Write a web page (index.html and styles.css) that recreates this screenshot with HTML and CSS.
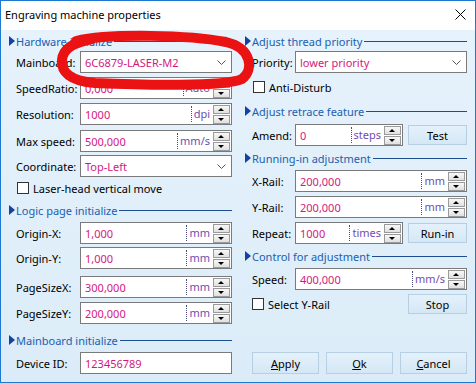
FILE: index.html
```html
<!DOCTYPE html>
<html lang="en">

<head>
    <meta charset="UTF-8" />
    <title>Engraving machine properties</title>
    <link rel="stylesheet" href="styles.css">
</head>

<body>
    <div class="window">
        <!-- Title bar -->
        <div class="titlebar">
            <span class="title">Engraving machine properties</span>
            <svg class="close" width="11" height="11" viewBox="0 0 11 11">
                <path d="M0.5 0.5 L10.5 10.5 M10.5 0.5 L0.5 10.5" stroke="#000" stroke-width="1" />
            </svg>
        </div>

        <div class="client">
            <!-- Left column -->
            <div class="col col-left">
                <div class="group-head"><span class="tri"></span><span class="group-title">Hardware initialize</span><span class="rule"></span></div>
                <div class="row mt2">
                    <span class="lbl">Mainboard:</span>
                    <div class="field combo"><span class="val">6C6879-LASER-M2</span><svg class="chev" width="9" height="5" viewBox="0 0 9 5"><path d="M0.5 0.5 L4.5 4.5 L8.5 0.5" fill="none" stroke="#555" /></svg></div>
                </div>
                <div class="row mt4">
                    <span class="lbl">SpeedRatio:</span>
                    <div class="field"><span class="val">0,000</span><span class="unit">Auto</span><span class="spin"><span class="spin-btn up"></span><span class="spin-btn down"></span></span></div>
                </div>
                <div class="row mt4">
                    <span class="lbl">Resolution:</span>
                    <div class="field"><span class="val">1000</span><span class="unit">dpi</span><span class="spin"><span class="spin-btn up"></span><span class="spin-btn down"></span></span></div>
                </div>
                <div class="row mt5">
                    <span class="lbl">Max speed:</span>
                    <div class="field"><span class="val">500,000</span><span class="unit">mm/s</span><span class="spin"><span class="spin-btn up"></span><span class="spin-btn down"></span></span></div>
                </div>
                <div class="row mt3">
                    <span class="lbl">Coordinate:</span>
                    <div class="field combo"><span class="val">Top-Left</span><svg class="chev" width="9" height="5" viewBox="0 0 9 5"><path d="M0.5 0.5 L4.5 4.5 L8.5 0.5" fill="none" stroke="#555" /></svg></div>
                </div>
                <div class="check-row mt4"><span class="box"></span>Laser-head vertical move</div>

                <div class="group-head mt7"><span class="tri"></span><span class="group-title">Logic page initialize</span><span class="rule"></span></div>
                <div class="row mt4">
                    <span class="lbl">Origin-X:</span>
                    <div class="field"><span class="val">1,000</span><span class="unit">mm</span><span class="spin"><span class="spin-btn up"></span><span class="spin-btn down"></span></span></div>
                </div>
                <div class="row mt3">
                    <span class="lbl">Origin-Y:</span>
                    <div class="field"><span class="val">1,000</span><span class="unit">mm</span><span class="spin"><span class="spin-btn up"></span><span class="spin-btn down"></span></span></div>
                </div>
                <div class="row mt7">
                    <span class="lbl">PageSizeX:</span>
                    <div class="field"><span class="val">300,000</span><span class="unit">mm</span><span class="spin"><span class="spin-btn up"></span><span class="spin-btn down"></span></span></div>
                </div>
                <div class="row mt4">
                    <span class="lbl">PageSizeY:</span>
                    <div class="field"><span class="val">200,000</span><span class="unit">mm</span><span class="spin"><span class="spin-btn up"></span><span class="spin-btn down"></span></span></div>
                </div>

                <div class="group-head mt8"><span class="tri"></span><span class="group-title">Mainboard initialize</span><span class="rule"></span></div>
                <div class="row mt4">
                    <span class="lbl">Device ID:</span>
                    <div class="field"><span class="val">123456789</span></div>
                </div>
            </div>

            <!-- Right column -->
            <div class="col col-right">
                <div class="group-head"><span class="tri"></span><span class="group-title">Adjust thread priority</span><span class="rule"></span></div>
                <div class="row mt2">
                    <span class="lbl">Priority:</span>
                    <div class="field combo"><span class="val">lower priority</span><svg class="chev" width="9" height="5" viewBox="0 0 9 5"><path d="M0.5 0.5 L4.5 4.5 L8.5 0.5" fill="none" stroke="#555" /></svg></div>
                </div>
                <div class="check-row mt7"><span class="box"></span>Anti-Disturb</div>

                <div class="group-head mt9"><span class="tri"></span><span class="group-title">Adjust retrace feature</span><span class="rule"></span></div>
                <div class="row mt5">
                    <span class="lbl">Amend:</span>
                    <div class="field short"><span class="val">0</span><span class="unit">steps</span><span class="spin"><span class="spin-btn up"></span><span class="spin-btn down"></span></span></div>
                    <button class="btn">Test</button>
                </div>

                <div class="group-head mt4"><span class="tri"></span><span class="group-title">Running-in adjustment</span><span class="rule"></span></div>
                <div class="row mt4">
                    <span class="lbl">X-Rail:</span>
                    <div class="field"><span class="val">200,000</span><span class="unit">mm</span><span class="spin"><span class="spin-btn up"></span><span class="spin-btn down"></span></span></div>
                </div>
                <div class="row mt4">
                    <span class="lbl">Y-Rail:</span>
                    <div class="field"><span class="val">200,000</span><span class="unit">mm</span><span class="spin"><span class="spin-btn up"></span><span class="spin-btn down"></span></span></div>
                </div>
                <div class="row mt4">
                    <span class="lbl">Repeat:</span>
                    <div class="field short"><span class="val">1000</span><span class="unit">times</span><span class="spin"><span class="spin-btn up"></span><span class="spin-btn down"></span></span></div>
                    <button class="btn">Run-in</button>
                </div>

                <div class="group-head mt4"><span class="tri"></span><span class="group-title">Control for adjustment</span><span class="rule"></span></div>
                <div class="row mt4">
                    <span class="lbl">Speed:</span>
                    <div class="field"><span class="val">400,000</span><span class="unit">mm/s</span><span class="spin"><span class="spin-btn up"></span><span class="spin-btn down"></span></span></div>
                </div>
                <div class="check-row tall mt4"><span class="box"></span><span class="check-text">Select Y-Rail</span><button class="btn">Stop</button></div>

                <div class="actions">
                    <button class="btn"><u>A</u>pply</button>
                    <button class="btn"><u>O</u>k</button>
                    <button class="btn"><u>C</u>ancel</button>
                </div>
            </div>
        </div>

        <!-- red marker scribble -->
        <svg class="scribble" width="476" height="383" viewBox="0 0 476 383">
            <path d="M76 41 C110 33 190 35 226 42 C252 48 254 70 242 79 C226 87 140 85 95 83 C70 81 61 72 62 60 C63 49 72 43 92 39"
                fill="none" stroke="#ea1212" stroke-width="10" stroke-linecap="round" />
        </svg>
    </div>
</body>

</html>
```

FILE: styles.css
```css
* {
    margin: 0;
    padding: 0;
    box-sizing: border-box;
    font-family: "Noto Sans", "Open Sans", sans-serif;
}

body {
    background-color: #ffffff;
}

.window {
    position: relative;
    width: 476px;
    height: 383px;
    border: 1px solid #1c78d0;
    background-color: #ffffff;
    display: flex;
    flex-direction: column;
}

/* Title bar */
.titlebar {
    height: 29px;
    display: flex;
    align-items: center;
    justify-content: space-between;
    padding: 0 9px 3px 4px;
}

.title {
    font-size: 11px;
    color: #000;
}

/* Client area */
.client {
    flex: 1;
    display: flex;
    gap: 12px;
    padding: 3px 7px 0 7px;
    background: linear-gradient(#e6f2fc, #dbecf8);
}

.col {
    display: flex;
    flex-direction: column;
}

.col-left {
    width: 224px;
}

.col-right {
    width: 223px;
}

.mt2 { margin-top: 2px; }
.mt3 { margin-top: 3px; }
.mt4 { margin-top: 4px; }
.mt5 { margin-top: 5px; }
.mt7 { margin-top: 7px; }
.mt8 { margin-top: 8px; }
.mt9 { margin-top: 9px; }

/* Group headers */
.group-head {
    height: 16px;
    display: flex;
    align-items: center;
}

.tri {
    width: 0;
    height: 0;
    border-left: 6px solid #1342a2;
    border-top: 5px solid transparent;
    border-bottom: 5px solid transparent;
    margin-left: 1px;
}

.group-title {
    color: #2060b0;
    font-size: 11px;
    margin-left: 1px;
    white-space: nowrap;
}

.rule {
    flex: 1;
    height: 1px;
    background-color: #1d4f8e;
    margin-left: 2px;
}

/* Rows */
.row {
    display: flex;
    align-items: center;
    height: 22px;
    padding-left: 8px;
}

.lbl {
    font-size: 11px;
    color: #000;
    white-space: nowrap;
}

.col-left .lbl {
    width: 64px;
}

.col-right .lbl {
    width: 43px;
}

.field {
    flex: 1;
    height: 22px;
    background-color: #ffffff;
    border: 1px solid #7a7a7a;
    display: flex;
    align-items: center;
}

.field.short {
    flex: none;
    width: 108px;
}

.val {
    flex: 1;
    color: #d4187f;
    font-size: 11px;
    padding-left: 4px;
    white-space: nowrap;
}

.unit {
    color: #6f4db2;
    font-size: 11px;
    height: 16px;
    line-height: 15px;
    border-left: 1px dotted #4a4a78;
    padding-left: 2px;
    margin-right: 3px;
}

.chev {
    margin-right: 5px;
}

.spin {
    display: flex;
    flex-direction: column;
    gap: 1px;
    width: 17px;
    margin-right: 1px;
}

.spin-btn {
    position: relative;
    height: 9px;
    border: 1px solid #9a9a9a;
    background: linear-gradient(#f8f8f8, #e0e0e0);
}

.spin-btn::after {
    content: "";
    position: absolute;
    left: 4px;
    top: 2px;
    border-left: 3px solid transparent;
    border-right: 3px solid transparent;
    border-bottom: 3px solid #000;
}

.spin-btn.down::after {
    border-bottom: 0;
    border-top: 3px solid #000;
}

/* Checkboxes */
.check-row {
    display: flex;
    align-items: center;
    height: 14px;
    padding-left: 9px;
    font-size: 11px;
    color: #000;
}

.check-row.tall {
    height: 20px;
    padding-left: 8px;
}

.check-text {
    flex: 1;
}

.box {
    width: 12px;
    height: 12px;
    border: 1px solid #333;
    background-color: #ffffff;
    margin-right: 4px;
}

/* Buttons */
.btn {
    width: 59px;
    height: 20px;
    margin-left: 5px;
    border: 1px solid #b7cfe3;
    background: linear-gradient(#e4f1fb, #d5e7f5);
    font-size: 11px;
    color: #000;
    display: flex;
    align-items: center;
    justify-content: center;
}

.actions {
    display: grid;
    grid-template-columns: repeat(3, 1fr);
    gap: 7px;
    padding-left: 8px;
    margin-top: 38px;
}

.actions .btn {
    width: auto;
    height: 22px;
    margin-left: 0;
}

/* Marker overlay */
.scribble {
    position: absolute;
    top: -1px;
    left: -1px;
    pointer-events: none;
}
```
